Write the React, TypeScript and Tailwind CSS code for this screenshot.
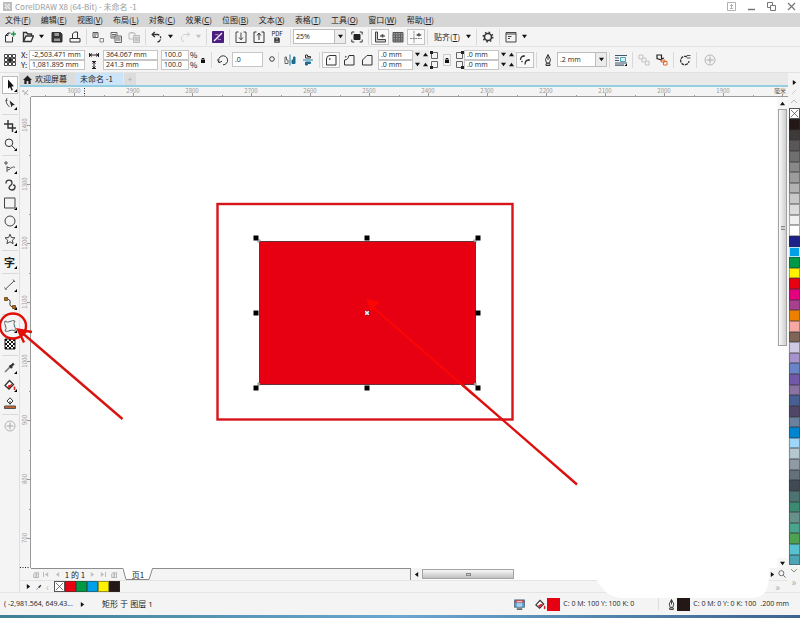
import React from 'react'
import clsx from 'clsx'

const MENUS: [string, string][] = [
  ['文件', 'F'],
  ['编辑', 'E'],
  ['视图', 'V'],
  ['布局', 'L'],
  ['对象', 'C'],
  ['效果', 'C'],
  ['位图', 'B'],
  ['文本', 'X'],
  ['表格', 'T'],
  ['工具', 'O'],
  ['窗口', 'W'],
  ['帮助', 'H'],
]

const PALETTE = [
  '#231815', '#3e3a39', '#595757', '#6f6f6f', '#888888', '#9c9c9c', '#b2b2b2', '#c8c8c8',
  '#dcdcdc', '#f0f0f0', '#ffffff', '#1d2088', '#00a0e9', '#009944', '#fff100', '#e60012',
  '#e4007f', '#a6408f', '#ed8000', '#f7a8a0', '#7d6558', '#cfc9e6', '#a793cb', '#6883c6',
  '#7258a8', '#8a73a3', '#475f92', '#524668', '#6a809f', '#0086d1', '#9ed7fa', '#b4c8d2',
  '#8e9ba5', '#64707c', '#404a55', '#4c7272', '#3c8a72', '#66918a', '#4aa38c', '#4ca152',
  '#56c1cf', '#4ba5b4',
]

const DOC_COLORS = ['#e60012', '#009944', '#00a0e9', '#fff100', '#231815']

const H_LABELS = [3000, 2900, 2800, 2700, 2600, 2500, 2400, 2300, 2200, 2100, 2000, 1900]
const V_LABELS = [1400, 1300, 1200, 1100, 1000, 900, 800, 700]
const STEP = 59

// All icons share a 12x12 grid
const ICONS: Record<string, React.ReactNode> = {
  new: (
    <>
      <path d="M6.500 2H4L1.500 4.500V11h7V6M4 2v2.500H1.500" />
      <path d="M9.500 .5v5M7 3h5" stroke="#1a9c4c" strokeWidth="1.500" />
    </>
  ),
  open: <path d="M1.500 10.500V1.500h3l1 1.500h4v2M1.500 10.500l2.500-5.500h7.500l-2.500 5.500z" strokeWidth="1.400" />,
  save: (
    <>
      <path d="M1 1.500h8.500L11 3v8H1z" fill="#333" />
      <path d="M3.500 2h4.500v3H3.500zM3 7.500h6V10H3z" fill="#999" stroke="none" />
    </>
  ),
  print: <path d="M3.500 7V3l2-2h3v6M1 7.500h10V11H1z" />,
  cut: (
    <>
      <path d="M1 1.500h5v5H1zM2 3h3M2 5h2" stroke="#555" />
      <path d="M8 7.500h3.500V11H8z" stroke="#888" />
    </>
  ),
  copy: (
    <>
      <path d="M1 1.500h6v5.500H1zM2 3.500h4M2 5.200h4" stroke="#666" />
      <path d="M5 5h6.500v6.500H5z" fill="#eee" stroke="#666" />
      <path d="M6 7h4.500M6 9h4.500" stroke="#666" />
    </>
  ),
  paste: (
    <>
      <path d="M1 2h6v6H1zM2.500 1.500h3" stroke="#bbb" />
      <path d="M5.500 4.500h6v7h-6z" fill="#ddd" stroke="#bbb" />
      <path d="M6.500 7h4M6.500 9h4" stroke="#aaa" />
    </>
  ),
  undo: (
    <>
      <path d="M1.500 3.500h5a3.800 3.800 0 0 1 0 7.500" strokeDasharray="7 1.200 2 1.200" strokeWidth="1.300" />
      <path d="M3.800 1L1.200 3.500 3.800 6" strokeWidth="1.300" />
    </>
  ),
  redo: (
    <path d="M10.500 3.500h-5a3.800 3.800 0 0 0 0 7.500M8.200 1l2.600 2.500L8.200 6" stroke="#ccc" strokeDasharray="7 1.200" />
  ),
  connect: (
    <>
      <path d="M.5 .5h11v11H.5z" fill="#4b1d7e" stroke="#4b1d7e" />
      <path d="M2 10L10 2" stroke="#fff" strokeWidth="1.300" />
      <path d="M3 3.500h3v2M9 8.500H6V6.500" stroke="#b9a0d8" strokeWidth=".8" />
    </>
  ),
  import: <path d="M3.500 1H1v10.500h10V1H8.500M6 1.500v7M4 6.500L6 8.800 8 6.500" stroke="#444" />,
  export: <path d="M3.500 1H1v10.500h10V1H8.500M6 9V2.200M4 4.500L6 2l2 2.500" stroke="#333" />,
  fullscreen: (
    <>
      <path d="M3 3.500h6v5H3z" fill="#222" stroke="#222" />
      <path d="M.8 3.500V1h2.500M8.700 1h2.500v2.500M11.200 8.500V11H8.700M3.300 11H.8V8.500" />
    </>
  ),
  rulers: (
    <>
      <path d="M1.500 1h2v7.500h8v2.500h-10z" fill="#ccc" stroke="#444" />
      <path d="M6 5q2.500-3 5 0q-2.500 2.500-5 0" stroke="#777" />
      <circle cx="8.500" cy="4.800" r=".7" fill="#555" />
    </>
  ),
  grid: (
    <>
      <path d="M1 1.500h10v9.500H1z" fill="#999" stroke="#555" />
      <path d="M1 4h10M1 6.500h10M1 9h10M3.500 1v10M6 1v10M8.500 1v10" stroke="#555" strokeWidth=".8" />
    </>
  ),
  guides: (
    <>
      <path d="M4 0v12M0 7.500h12" stroke="#888" strokeDasharray="2 .6" />
      <path d="M6.500 4q2.300-3 4.700 0q-2.400 2.300-4.700 0" stroke="#777" />
      <circle cx="8.800" cy="3.800" r=".7" fill="#555" />
    </>
  ),
  gear: (
    <>
      <circle cx="6" cy="6" r="3.500" strokeWidth="1.600" />
      <circle cx="6" cy="6" r="4.800" strokeWidth="1.400" strokeDasharray="1.600 2.170" />
    </>
  ),
  launch: <path d="M1 1.500h10v9.500H1zM1 3h10M3 5.500h3.500M3 7.500h2" stroke="#444" />,
  origin: (
    <>
      <path d="M2 2h8v8H2zM6 2v8M2 6h8" stroke="#666" />
      {[1, 5, 9].map((x) => [1, 5, 9].map((y) => (
        <path
          key={`${x}-${y}`}
          d={`M${x - 0.5} ${y - 0.5}h3v3h-3z`}
          fill={x === 5 && y === 5 ? '#222' : '#fff'}
          strokeWidth=".9"
        />
      )))}
    </>
  ),
  rotate: <path d="M2.200 8.500A4.500 4.500 0 1 1 6 10.800M.5 5.500L2 8.800 5 7.200" />,
  mirrorH: (
    <>
      <path d="M6 .5v11" stroke="#1d7fa3" />
      <path d="M1 3v6.500h3V6H2.500V3z" stroke="#666" />
      <path d="M11 3v6.500H8V6h1.500V3z" fill="#1d6c90" stroke="#1d6c90" />
    </>
  ),
  mirrorV: (
    <>
      <path d="M1 6h10" stroke="#1d7fa3" />
      <path d="M3.500 1v3h5V2.500H5.500V1z" />
      <path d="M3.500 11V8h5v1.500H5.500V11z" fill="#1d6c90" stroke="#1d6c90" />
    </>
  ),
  round: (
    <>
      <path d="M1.500 11V5q0-3.500 3.500-3.500h6V11z" />
      <circle cx="4.800" cy="5" r=".5" />
    </>
  ),
  scallop: (
    <>
      <path d="M1.500 11V6q3.500 0 4.500-4.500h5V11z" />
      <circle cx="2.800" cy="2.800" r=".4" />
    </>
  ),
  chamfer: <path d="M1.500 11V6L6 1.500h5V11z" />,
  relative: <path d="M1.500 6q0-4 4-4M6 10.500q0-4.500 4-4.500M5 1v2M10 5v2M2.500 8l1-1" strokeWidth="1.300" />,
  nib: <path d="M6 .5L3.500 5.500 4.500 9h3l1-3.500zM4 9.800h4v1.700H4zM6 1v5" stroke="#333" />,
  wrap: (
    <>
      <path d="M0 1.500h12M0 4h4M0 6.500h4M0 9h12M0 11.200h9" stroke="#456" strokeWidth="1.200" />
      <path d="M5.500 3.500h5v4h-5z" fill="#d8f2fb" stroke="#4ab" />
      <path d="M12 9.500V12H9.500z" fill="#000" stroke="none" />
    </>
  ),
  front: <path d="M1 1h4v4H1zM4 4h4v4H4zM7.500 7h3.500v4H7.500z" stroke="#c4c4c4" />,
  back: (
    <>
      <path d="M1 1h4.500v5L1 4.500zM5 5l3-1" stroke="#222" strokeWidth="1.200" />
      <path d="M5 6h4v2H5zM7.500 7.500h3.500v3.500H7.500z" stroke="#e06a2c" />
    </>
  ),
  curves: (
    <>
      <path d="M8 3A4.200 4.200 0 1 0 10 7" strokeDasharray="3 .8" strokeWidth="1.300" />
      <path d="M7.500 1.500h4M8 4h3.500" stroke="#555" />
    </>
  ),
  plus: (
    <>
      <circle cx="6" cy="6" r="5" stroke="#b5b5b5" />
      <path d="M6 2.500v7M2.500 6h7" stroke="#a8a8a8" />
    </>
  ),
  pick: <path d="M4 .5v9.200l2-1.800 1.600 3.600 1.300-.6L7.400 7.400l2.600-.2z" fill="#111" stroke="none" />,
  shape: (
    <>
      <path d="M3 1q-1.500 3-.5 5T5.500 10M1.500 3.500h2" stroke="#555" />
      <path d="M5.500 3.500L11 8l-2.500.2L7.500 10.500z" fill="#222" stroke="none" />
    </>
  ),
  crop: <path d="M4 0v8h8M0 4h8.500v8" strokeWidth="1.400" />,
  zoom: <path d="M5 1a3.800 3.800 0 1 1 0 7.600A3.800 3.800 0 1 1 5 1zM8 7.800L11.500 11.500" />,
  freehand: <path d="M2 0v4M0 2h4M3 5v6M3 6.500h2.500q1 1.500 2.500 0t3 0M3 9q2.500 0 3.500-1.500" stroke="#555" />,
  artistic: <path d="M2 4.500q0-3.300 3-3.300T8 4q0 1.500-1.500 2.500T5 9q.5 2 3 2t3-2.500T9 6" strokeWidth="1.300" />,
  rect: <path d="M.5 1h10.500v10H.5z" stroke="#444" />,
  ellipse: <circle cx="6" cy="6" r="5" stroke="#444" />,
  star: <path d="M6 1.200l1.400 3.300 3.600.3-2.700 2.400.8 3.500L6 8.800l-3.100 1.900.8-3.500L1 4.800l3.600-.3z" stroke="#444" />,
  dimension: <path d="M1.500 10L10 2M.5 8.500l2 2.500M9 .5l2 2.500" stroke="#555" />,
  connector: (
    <>
      <path d="M2 2q5 0 4 4t4.500 4" />
      <path d="M.5 .5h3v3h-3zM8.500 8.500h3v3h-3z" fill="#a6702e" stroke="#7d5420" />
    </>
  ),
  envelope: (
    <>
      <path
        d="M1 1q2.500 2 5 .5q2.500-1.500 5-.5q-2 2.500-.5 5q1.500 2.500 .5 5q-2.500-1.500-5-.5q-2.500 1.500-5 .5q2-2.500 .5-5q-1.500-2.500-.5-5z"
        stroke="#666"
      />
      <path d="M5.500 1.500h1M1.500 5.500v1M10.500 5.500v1M5.500 10.500h1" stroke="#2d8bb5" strokeWidth="1.200" />
    </>
  ),
  transparency: (
    <>
      <path d="M1 1h10v10H1z" fill="#fff" stroke="#222" />
      {[0, 1, 2, 3, 4].map((r) => [0, 1, 2, 3, 4].map((c) => (r + c) % 2 === 0 && (
        <path key={`${r}-${c}`} d={`M${1 + c * 2} ${1 + r * 2}h2v2h-2z`} fill="#111" stroke="none" />
      )))}
    </>
  ),
  eyedropper: (
    <>
      <path d="M1 11L6.500 5.500" stroke="#777" strokeWidth="1.600" />
      <path d="M5.500 4.500l2.500 2.500M6.800 5.500l3-3" strokeWidth="2.400" />
    </>
  ),
  fill: (
    <>
      <path d="M1 6.500L5.500 1.500l4 4L5 10z" fill="#fff" strokeWidth="1.300" />
      <path d="M4 7l4-1.500L5 9z" fill="#d22" stroke="#d22" />
      <path d="M10.500 7.500v3.500" stroke="#d22" strokeWidth="1.600" />
    </>
  ),
  smartfill: (
    <>
      <path d="M6 .8L9 4 6 7 3 4zM6 4v3.500" fill="#fff" />
      <path d="M.5 9h11v2.500H.5z" fill="#c8622c" stroke="#555" />
    </>
  ),
  proof: (
    <>
      <path d="M.5 1h11v8H.5z" fill="#4aa3d8" stroke="#5b6f80" />
      <path d="M1 1.500h10V4H1z" fill="#d03a3a" stroke="none" />
      <path d="M3 3h6M3 5.500h6M3 7.500h6" stroke="#fff" />
      <path d="M3 11h6" stroke="#333" strokeWidth="1.400" />
    </>
  ),
  page: <path d="M3.500 1.500H11V11H1.500V4zM5 4.500h3.500M6.500 3v5M4 8.500h4" stroke="#777" />,
  home: <path d="M6 .5L0 6.500h1.800V12h3V8h2.400v4h3V6.500H12z" fill="#222" stroke="none" />,
}

function Icon({ name, className = 'size-3' }: { name: string; className?: string }) {
  return (
    <svg viewBox="0 0 12 12" fill="none" stroke="#333" className={clsx('block shrink-0', className)} aria-hidden="true">
      {ICONS[name]}
    </svg>
  )
}

function Caret({ dim, dir = 'down' }: { dim?: boolean; dir?: 'down' | 'up' | 'left' | 'right' }) {
  const d = {
    down: 'M0 1h6L3 5z',
    up: 'M0 5h6L3 1z',
    left: 'M5 0v6L1 3z',
    right: 'M1 0v6l4-3z',
  }[dir]
  return (
    <svg viewBox="0 0 6 6" className="block size-[5px] shrink-0" aria-hidden="true">
      <path d={d} fill={dim ? '#c0c0c0' : '#111'} />
    </svg>
  )
}

function Tool({ name, boxed, label }: { name: string; boxed?: boolean; label?: string }) {
  return (
    <button
      type="button"
      aria-label={label ?? name}
      className={clsx(
        'flex h-4 w-[18px] shrink-0 items-center justify-center border',
        boxed ? 'border-[#c4c4c4] bg-[#fafafa]' : 'border-transparent',
      )}
    >
      <Icon name={name} />
    </button>
  )
}

function DropButton({ dim, label }: { dim?: boolean; label: string }) {
  return (
    <button type="button" aria-label={label} className="flex h-4 w-2 shrink-0 items-center justify-center">
      <Caret dim={dim} />
    </button>
  )
}

function Sep() {
  return <div className="mx-[2px] h-4 w-px shrink-0 bg-[#d9d9d9]" />
}

function Field({ value, label, className }: { value: string; label: string; className?: string }) {
  return (
    <input
      type="text"
      aria-label={label}
      defaultValue={value}
      className={clsx(
        "h-[10px] border border-[#c6c6c6] bg-white px-[2px] font-['Open_Sans',sans-serif] text-[7px] leading-[8px] outline-none",
        className,
      )}
    />
  )
}

function Combo({ value, label, className }: { value: string; label: string; className: string }) {
  return (
    <div className={clsx('relative h-[15px] shrink-0', className)}>
      <select
        aria-label={label}
        defaultValue={value}
        className="block size-full appearance-none border border-[#bdbdbd] bg-white px-[2px] font-['Open_Sans',sans-serif] text-[7px] leading-[13px] outline-none"
      >
        <option>{value}</option>
      </select>
      <span className="pointer-events-none absolute inset-y-0 right-0 flex w-3 items-center justify-center border border-[#bdbdbd] bg-[#ececec]">
        <Caret />
      </span>
    </div>
  )
}

function CornerPair({ label }: { label: string }) {
  return (
    <div className="flex w-[52px] shrink-0 flex-col">
      {['上', '下'].map((side) => (
        <div key={side} className="flex h-[10px]">
          <Field value=".0 mm" label={`${label}${side}`} className="w-[35px]" />
          <button type="button" aria-label="-" className="flex w-2 items-center justify-center bg-[#ebebeb]">
            <Caret />
          </button>
          <button type="button" aria-label="+" className="flex w-2 items-center justify-center bg-[#ebebeb]">
            <Caret dir="up" />
          </button>
        </div>
      ))}
    </div>
  )
}

function Corners({ side }: { side: 'left' | 'right' }) {
  const x = side === 'left' ? 0 : 6
  return (
    <svg viewBox="0 0 9 20" className="h-5 w-[9px] shrink-0" fill="none" stroke="#666" aria-hidden="true">
      <path d="M1.500 2.500h6v6h-6zM1.500 11.500h6v6h-6z" />
      <path d={`M${x} 1h3v3h-3zM${x} 16h3v3h-3z`} fill="#222" stroke="none" />
    </svg>
  )
}

function Lock() {
  return (
    <svg viewBox="0 0 6 6" className="size-[6px] shrink-0" aria-hidden="true">
      <path d="M1 3h4v3H1z" fill="#111" />
      <path d="M2 3V1.500h2V3" fill="none" stroke="#111" />
    </svg>
  )
}

function TitleBar() {
  return (
    <header className="flex h-[13px] shrink-0 items-center bg-white pl-[3px] pr-1 text-[8px] text-[#9a9a9a]">
      <svg viewBox="0 0 9 9" className="mr-[3px] size-[9px]" aria-hidden="true">
        <rect width="9" height="9" fill="#bcbcbc" />
        <path d="M2 2l5 5M2 5l2 2M5 2l2 2" stroke="#f2f2f2" strokeWidth="1.200" />
      </svg>
      <h1 className="grow whitespace-nowrap">CorelDRAW X8 (64-Bit) - 未命名 -1</h1>
      <div className="flex items-center gap-[11px]">
        <button type="button" aria-label="登录">
          <svg viewBox="0 0 9 9" className="size-[9px]" fill="none" stroke="#b0b0b0">
            <path d="M.5 .5h8v8h-8zM4.500 2v4M3 6.500h3M3 3.500h3" />
          </svg>
        </button>
        <button type="button" aria-label="最小化">
          <svg viewBox="0 0 9 9" className="size-[9px]" stroke="#777">
            <path d="M1 7.500h7" strokeWidth="1.500" />
          </svg>
        </button>
        <button type="button" aria-label="还原">
          <svg viewBox="0 0 9 9" className="size-[9px]" fill="none" stroke="#777">
            <path d="M.5 .5h5v5h-5z" />
            <path d="M3.500 3.500h5v5h-5z" fill="#fff" />
          </svg>
        </button>
        <button type="button" aria-label="关闭">
          <svg viewBox="0 0 9 9" className="size-[9px]" stroke="#777">
            <path d="M1 1l7 7M8 1L1 8" strokeWidth="1.200" />
          </svg>
        </button>
      </div>
    </header>
  )
}

function MenuBar() {
  return (
    <nav className="flex h-[14px] shrink-0 items-center gap-[10px] bg-[#d6d6d6] pl-[5px] text-[8px] text-[#222]">
      {MENUS.map(([name, key]) => (
        <button key={name} type="button" className="whitespace-nowrap">
          {name}(<u>{key}</u>)
        </button>
      ))}
    </nav>
  )
}

function StandardBar() {
  return (
    <div className="flex h-[20px] shrink-0 items-center border-b border-[#e2e2e2] bg-[#f4f4f4] pl-px">
      <Tool name="new" />
      <Tool name="open" />
      <DropButton label="打开列表" />
      <div className="w-[3px]" />
      <Tool name="save" />
      <Tool name="print" />
      <Sep />
      <Tool name="cut" />
      <Tool name="copy" />
      <Tool name="paste" />
      <Sep />
      <Tool name="undo" />
      <DropButton label="撤销列表" />
      <div className="w-[2px]" />
      <Tool name="redo" />
      <DropButton dim label="重做列表" />
      <div className="w-[2px]" />
      <Sep />
      <Tool name="connect" />
      <Sep />
      <Tool name="import" />
      <Tool name="export" />
      <button type="button" className="flex h-4 w-[18px] flex-col items-center justify-center text-[6px] leading-[6px]">
        PDF
        <Icon name="save" className="size-[6px]" />
      </button>
      <div className="w-[2px]" />
      <Sep />
      <Combo value="25%" label="缩放级别" className="w-[53px]" />
      <div className="w-[2px]" />
      <Tool name="fullscreen" />
      <Sep />
      <Tool name="rulers" boxed />
      <Tool name="grid" />
      <Tool name="guides" boxed />
      <Sep />
      <button type="button" className="ml-[4px] whitespace-nowrap text-[8px]">
        贴齐(<u>T</u>)
      </button>
      <div className="w-1" />
      <DropButton label="贴齐选项" />
      <div className="w-[2px]" />
      <Sep />
      <Tool name="gear" />
      <Sep />
      <Tool name="launch" />
      <DropButton label="应用程序启动器" />
    </div>
  )
}

function PropertyBar() {
  return (
    <div className="flex h-[26px] shrink-0 items-center border-b border-[#e2e2e2] bg-[#f4f4f4] pl-px text-[8px]">
      <Tool name="origin" />
      <div className="ml-[2px] flex flex-col">
        {[['X:', '-2,503.471 mm'], ['Y:', '1,081.895 mm']].map(([axis, value]) => (
          <label key={axis} className="flex h-[10px] items-center">
            <span className="w-2 leading-[10px]">{axis}</span>
            <Field value={value} label={axis} className="w-[56px]" />
          </label>
        ))}
      </div>
      <svg viewBox="0 0 10 20" className="mx-[4px] h-5 w-[10px] shrink-0" stroke="#222" fill="none" aria-hidden="true">
        <path d="M.5 3v4M9.500 3v4M1 5h8M3 3.500L1 5l2 1.500M7 3.500L9 5 7 6.500M3 11.500h4M3 18.500h4M5 12v6M3.500 13.500L5 12l1.500 1.500M3.500 16.500L5 18l1.500-1.500" />
      </svg>
      <div className="flex flex-col">
        <Field value="364.067 mm" label="宽度" className="w-[55px]" />
        <Field value="241.3 mm" label="高度" className="w-[55px]" />
      </div>
      <div className="ml-[3px] flex flex-col">
        {['水平缩放', '垂直缩放'].map((label) => (
          <label key={label} className="flex h-[10px] items-center">
            <Field value="100.0" label={label} className="w-7" />
            <span className="w-2 pl-[1px] leading-[10px]">%</span>
          </label>
        ))}
      </div>
      <button type="button" aria-label="锁定比率" className="flex w-3 justify-center">
        <Lock />
      </button>
      <Sep />
      <Tool name="rotate" />
      <Field value=".0" label="旋转角度" className="h-[15px] w-[31px]" />
      <svg viewBox="0 0 8 8" className="ml-[5px] size-2" fill="none" stroke="#444" aria-hidden="true">
        <circle cx="4" cy="3" r="2.300" />
      </svg>
      <Sep />
      <Tool name="mirrorH" />
      <Tool name="mirrorV" />
      <Sep />
      <Tool name="round" boxed />
      <Tool name="scallop" />
      <Tool name="chamfer" />
      <div className="w-[2px]" />
      <CornerPair label="左" />
      <Corners side="left" />
      <button type="button" aria-label="同时编辑所有角" className="mx-[4px] flex h-3 w-[8px] items-center justify-center border border-[#ccc]">
        <Lock />
      </button>
      <Corners side="right" />
      <CornerPair label="右" />
      <Tool name="relative" boxed />
      <Sep />
      <Tool name="nib" />
      <Combo value=".2 mm" label="轮廓宽度" className="w-[50px]" />
      <Sep />
      <Tool name="wrap" />
      <Sep />
      <Tool name="front" />
      <Tool name="back" />
      <Sep />
      <Tool name="curves" />
      <Sep />
      <div className="w-[2px]" />
      <Tool name="plus" />
    </div>
  )
}

const TOOL_GROUPS: { name: string; flyout?: boolean }[][] = [
  [{ name: 'pick', flyout: true }, { name: 'shape', flyout: true }],
  [{ name: 'crop', flyout: true }, { name: 'zoom', flyout: true }],
  [
    { name: 'freehand', flyout: true },
    { name: 'artistic' },
    { name: 'rect', flyout: true },
    { name: 'ellipse', flyout: true },
    { name: 'star', flyout: true },
  ],
  [{ name: 'text', flyout: true }],
  [{ name: 'dimension', flyout: true }, { name: 'connector', flyout: true }],
  [{ name: 'envelope', flyout: true }, { name: 'transparency' }],
  [{ name: 'eyedropper', flyout: true }, { name: 'fill', flyout: true }, { name: 'smartfill' }],
  [{ name: 'plus' }],
]

function Toolbox() {
  return (
    <aside className="flex w-5 shrink-0 flex-col items-center gap-[2px] border-r border-[#dedede] bg-[#f4f4f4] pt-[3px]">
      {TOOL_GROUPS.map((group, i) => (
        <React.Fragment key={i}>
          {i > 0 && <div className="h-px w-4 bg-[#d9d9d9]" />}
          <div className="flex flex-col">
            {group.map(({ name, flyout }) => (
              <button
                key={name}
                type="button"
                aria-label={name}
                className={clsx(
                  'relative flex h-[18px] w-4 items-center justify-center border',
                  name === 'pick' ? 'border-[#bbb] bg-white' : 'border-transparent',
                )}
              >
                {name === 'text' ? (
                  <span className="text-[11px] font-bold leading-none text-[#222]">字</span>
                ) : (
                  <Icon name={name} />
                )}
                {flyout && (
                  <svg viewBox="0 0 3 3" className="absolute bottom-px right-0 size-[3px]" aria-hidden="true">
                    <path d="M3 0v3H0z" fill="#000" />
                  </svg>
                )}
              </button>
            ))}
          </div>
        </React.Fragment>
      ))}
    </aside>
  )
}

function Tabs() {
  return (
    <div className="flex h-[14px] shrink-0 border-b-2 border-[#93cfe0] bg-[#e9e9e9] text-[8px] text-[#222]">
      <button type="button" className="flex items-center gap-[3px] bg-[#dcdcdc] pl-[3px] pr-2">
        <Icon name="home" className="size-[9px]" />
        欢迎屏幕
      </button>
      <button type="button" className="flex w-12 items-center whitespace-nowrap bg-[#cbe4fa] pl-[5px]">
        未命名 -1
      </button>
      <button type="button" aria-label="新建标签" className="ml-px flex w-3 items-center justify-center bg-[#dcdcdc] text-[#aaa]">
        +
      </button>
    </div>
  )
}

function HorizontalRuler() {
  return (
    <div className="relative h-[10px] shrink-0 bg-[#f4f4f4]">
      <svg className="block h-[10px] w-full" fontSize="6" fill="#999" stroke="none">
        <path d="M3 4l5 4M4 8l4-5M2 4h2" stroke="#aaa" fill="none" />
        {Array.from({ length: 150 }, (_, i) => {
          const x = Math.round(54 - 2 * STEP + (i * STEP) / 10)
          return x > 14 && x < 768 ? (
            <path key={i} d={`M${x + 0.5} ${i % 10 === 0 ? 6 : i % 5 === 0 ? 8 : 9}V10`} stroke={i % 5 === 0 ? '#999' : '#ddd'} />
          ) : null
        })}
        {H_LABELS.map((n, i) => (
          <text key={n} x={54 + i * STEP} y="6" textAnchor="middle">
            {n}
          </text>
        ))}
        <path d="M64.500 1v9" stroke="#222" strokeDasharray="1 1.500" />
        <path d="M11 9.500H2000" stroke="#999" />
      </svg>
      <span className="absolute right-[2px] top-0 bg-[#f4f4f4] text-[6px] leading-[7px] text-[#555]">毫米</span>
    </div>
  )
}

function VerticalRuler() {
  return (
    <svg className="block h-full w-[11px] shrink-0 bg-[#f4f4f4]" fontSize="6" fill="#999">
      {Array.from({ length: 90 }, (_, i) => {
        const y = Math.round(28 - STEP + (i * STEP) / 10)
        return (
          <path key={i} d={`M${i % 10 === 0 ? 7 : i % 5 === 0 ? 9 : 10} ${y + 0.5}H11`} stroke={i % 5 === 0 ? '#999' : '#ddd'} />
        )
      })}
      {V_LABELS.map((n, i) => (
        <text key={n} transform={`translate(7 ${28 + i * STEP}) rotate(-90)`} textAnchor="middle">
          {n}
        </text>
      ))}
      <path d="M0 470.500h10" stroke="#222" strokeDasharray="1 1.500" />
      <path d="M10.500 0v2000" stroke="#999" />
    </svg>
  )
}

const HANDLES = [
  [225, 141], [336, 141], [447, 141],
  [225, 216], [447, 216],
  [225, 291], [336, 291], [447, 291],
]

function Drawing() {
  return (
    <svg className="block h-full min-w-0 grow overflow-hidden bg-white">
      <rect x="186.500" y="107" width="295" height="215.500" fill="none" stroke="#d7141a" strokeWidth="2.400" />
      <rect x="228.500" y="144.500" width="216" height="143" fill="#e60012" stroke="#6b3038" />
      {HANDLES.map(([x, y]) => (
        <rect key={`${x}-${y}`} x={x - 2.5} y={y - 2.5} width="5" height="5" fill="#000" />
      ))}
      {[[228, 144], [444, 144], [228, 287], [444, 287]].map(([x, y]) => (
        <rect key={`${x}-${y}`} x={x - 1} y={y - 1} width="2" height="2" fill="#fff" stroke="#555" strokeWidth=".7" />
      ))}
      <rect x="334" y="214" width="4" height="4" fill="#9db3bd" />
      <path d="M334 214l4 4M338 214l-4 4" stroke="#fff" strokeWidth=".8" />
    </svg>
  )
}

function VScroll() {
  return (
    <div className="flex w-[11px] shrink-0 flex-col items-center bg-[#f7f7f7]">
      <button type="button" aria-label="向上滚动" className="flex h-3 w-full items-center justify-center">
        <Caret dir="up" />
      </button>
      <div className="flex w-[9px] grow-[236] basis-0 items-center justify-center border border-[#a2a2a2] bg-gradient-to-r from-[#fafafa] to-[#cfcfcf]">
        <div className="h-1 w-[4px] border-y border-[#888] bg-[#ccc]" />
      </div>
      <div className="w-full grow-[212] basis-0 bg-white" />
      <button type="button" aria-label="向下滚动" className="flex h-[10px] w-full items-center justify-center">
        <Caret />
      </button>
    </div>
  )
}

function PageBar() {
  return (
    <div className="flex h-3 shrink-0 bg-white text-[8px]">
      <div className="w-[11px] shrink-0 bg-[#f4f4f4]" />
      <div className="flex w-[380px] items-center border-r border-t border-[#8d8d8d] bg-[#f4f4f4] pl-[2px]">
        <button type="button" aria-label="添加页面">
          <Icon name="page" className="size-[6px]" />
        </button>
        <div className="ml-1 flex items-center gap-[6px] text-[#bbb]">
          <button type="button" aria-label="首页" className="flex items-center">
            <span className="h-[5px] w-px bg-[#bbb]" />
            <Caret dim dir="left" />
          </button>
          <button type="button" aria-label="上一页">
            <Caret dim dir="left" />
          </button>
        </div>
        <span className="mx-[3px] w-6 whitespace-nowrap text-center leading-[11px]">1 的 1</span>
        <div className="flex items-center gap-[5px]">
          <button type="button" aria-label="下一页">
            <Caret dim dir="right" />
          </button>
          <button type="button" aria-label="末页" className="flex items-center">
            <Caret dim dir="right" />
            <span className="h-[5px] w-px bg-[#bbb]" />
          </button>
          <button type="button" aria-label="在后面添加页面">
            <Icon name="page" className="size-[6px]" />
          </button>
        </div>
        <button type="button" className="relative -mt-px ml-[6px] h-3 w-[30px]">
          <svg viewBox="0 0 30 12" className="absolute inset-0 size-full" aria-hidden="true">
            <path d="M0 0L3 11.500h23L29.500 0z" fill="#fff" />
            <path d="M0 .5L3 11.500h23L29.500 .5" fill="none" stroke="#888" />
          </svg>
          <span className="relative block leading-[11px]">页1</span>
        </button>
      </div>
      <button type="button" aria-label="向左滚动" className="flex w-[11px] items-center justify-center bg-[#f4f4f4]">
        <Caret dir="left" />
      </button>
      <div className="flex h-[10px] w-[92px] items-center justify-center self-center border border-[#a2a2a2] bg-gradient-to-b from-[#f8f8f8] to-[#c2c2c2]">
        <div className="h-[3px] w-[5px] border border-[#888] bg-[#ccc]" />
      </div>
      <div className="grow" />
      <button type="button" aria-label="向右滚动" className="flex w-2 items-center justify-center bg-[#f4f4f4]">
        <Caret dir="right" />
      </button>
      <button type="button" aria-label="导航器" className="flex w-3 items-center justify-center bg-[#f4f4f4]">
        <Icon name="zoom" className="size-2" />
      </button>
    </div>
  )
}

function NoColor({ className }: { className: string }) {
  return (
    <button type="button" aria-label="无填充" className={clsx('border border-[#555] bg-white', className)}>
      <svg viewBox="0 0 10 10" preserveAspectRatio="none" className="block size-full" stroke="#444" strokeWidth=".8">
        <path d="M1 1l8 8M9 1L1 9" />
      </svg>
    </button>
  )
}

function DocumentPalette() {
  return (
    <div className="flex h-3 shrink-0 items-center border-t border-[#e4e4e4] bg-[#f4f4f4] pl-[6px]">
      <Caret dir="right" />
      <Icon name="eyedropper" className="ml-[5px] size-[6px]" />
      <span className="ml-[4px] mr-[3px] w-1 text-[10px] leading-none text-[#bbb]">‹</span>
      <NoColor className="ml-px size-[11px]" />
      {DOC_COLORS.map((c) => (
        <button key={c} type="button" aria-label={c} className="h-[11px] w-[11px] border border-[#333]/50" style={{ background: c }} />
      ))}
      <span className="ml-auto pr-2 text-[10px] leading-none text-[#aaa]">»</span>
    </div>
  )
}

function ColorPalette() {
  return (
    <aside className="flex w-3 shrink-0 flex-col items-center bg-[#f4f4f4]">
      <div className="flex h-[35px] flex-col items-center justify-end gap-[4px] pb-[3px]">
        <Caret dir="right" />
        <svg viewBox="0 0 6 6" className="size-[6px]" stroke="#ccc" fill="none">
          <path d="M1 5l4-4" />
        </svg>
        <svg viewBox="0 0 6 6" className="size-[6px]" stroke="#bbb" fill="none">
          <path d="M0 4l3-3 3 3" />
        </svg>
      </div>
      <div className="flex w-[11px] grow flex-col">
        <NoColor className="w-full flex-1" />
        {PALETTE.map((c) => (
          <button
            key={c}
            type="button"
            aria-label={c}
            className={clsx('w-full flex-1 border', c === '#00a0e9' ? 'border-[#b8e6fa]' : 'border-[#333]/40')}
            style={{ background: c }}
          />
        ))}
      </div>
      <div className="flex h-[27px] flex-col items-center gap-1 pt-1">
        <svg viewBox="0 0 6 4" className="h-1 w-[6px]" stroke="#7c9a6c" fill="none">
          <path d="M0 0l3 3 3-3" />
        </svg>
        <span className="text-[10px] leading-none text-[#aaa]">»</span>
      </div>
    </aside>
  )
}

function StatusBar() {
  return (
    <footer className="flex h-[23px] shrink-0 items-center whitespace-nowrap border-t border-[#e4e4e4] bg-[#f4f4f4] pl-1 pr-[11px] font-['Open_Sans','Noto_Sans_CJK_SC',sans-serif] text-[7px]">
      <span className="w-[76px]">( -2,981.564, 649.43...</span>
      <Caret dir="right" />
      <span className="ml-[17px] text-[8px]">矩形 于 图层 1</span>
      <button type="button" aria-label="校样颜色" className="ml-auto mr-[10px]">
        <Icon name="proof" className="size-[11px]" />
      </button>
      <Icon name="fill" className="size-[11px]" />
      <span className="ml-px size-[13px] bg-[#e60012]" />
      <span className="ml-[3px] w-[95px]">C: 0 M: 100 Y: 100 K: 0</span>
      <span className="h-3 w-px bg-[#ddd]" />
      <Icon name="nib" className="ml-[7px] size-[11px]" />
      <span className="size-[13px] bg-[#231815]" />
      <span className="ml-[3px]">C: 0 M: 0 Y: 0 K: 100</span>
      <span className="ml-1">.200 mm</span>
    </footer>
  )
}

// Hand-drawn callouts that lie over the whole window
function Callouts() {
  return (
    <svg className="pointer-events-none absolute inset-0 size-full" fill="none" aria-hidden="true">
      <path d="M596 568V579Q599 585 603 589Q610 598 624 598H752Q765 598 768 585L770 568z" fill="#fff" />
      <ellipse cx="13" cy="326" rx="13" ry="12.500" stroke="#e01008" strokeWidth="2.400" />
      <path d="M122.500 419L20 331" stroke="#d7140f" strokeWidth="2.400" />
      <path d="M32 332L18 329.500L24 342.500" stroke="#e01008" strokeWidth="2.400" />
      <path d="M18 329l10 2-5 5z" fill="#e01008" />
      <path d="M475 396L368 303" stroke="#fb0505" strokeWidth="2.200" />
      <path d="M366 299l14 2.500-9 10z" fill="#fb0505" />
      <path d="M462 384.500L577 484.500" stroke="#dc100c" strokeWidth="2.400" />
    </svg>
  )
}

export default function App() {
  return (
    <div className="relative flex h-screen flex-col overflow-hidden bg-[#f4f4f4] font-['Noto_Sans_CJK_SC',sans-serif] text-[#222]">
      <TitleBar />
      <MenuBar />
      <StandardBar />
      <PropertyBar />
      <div className="flex min-h-0 grow">
        <Toolbox />
        <main className="flex min-w-0 grow flex-col">
          <Tabs />
          <HorizontalRuler />
          <div className="flex min-h-0 grow">
            <VerticalRuler />
            <Drawing />
            <VScroll />
          </div>
          <PageBar />
          <DocumentPalette />
        </main>
        <ColorPalette />
      </div>
      <StatusBar />
      <div className="h-[3px] shrink-0 bg-gradient-to-r from-[#3f7f96] via-[#6ba6cf] to-[#3d648c]" />
      <Callouts />
    </div>
  )
}
